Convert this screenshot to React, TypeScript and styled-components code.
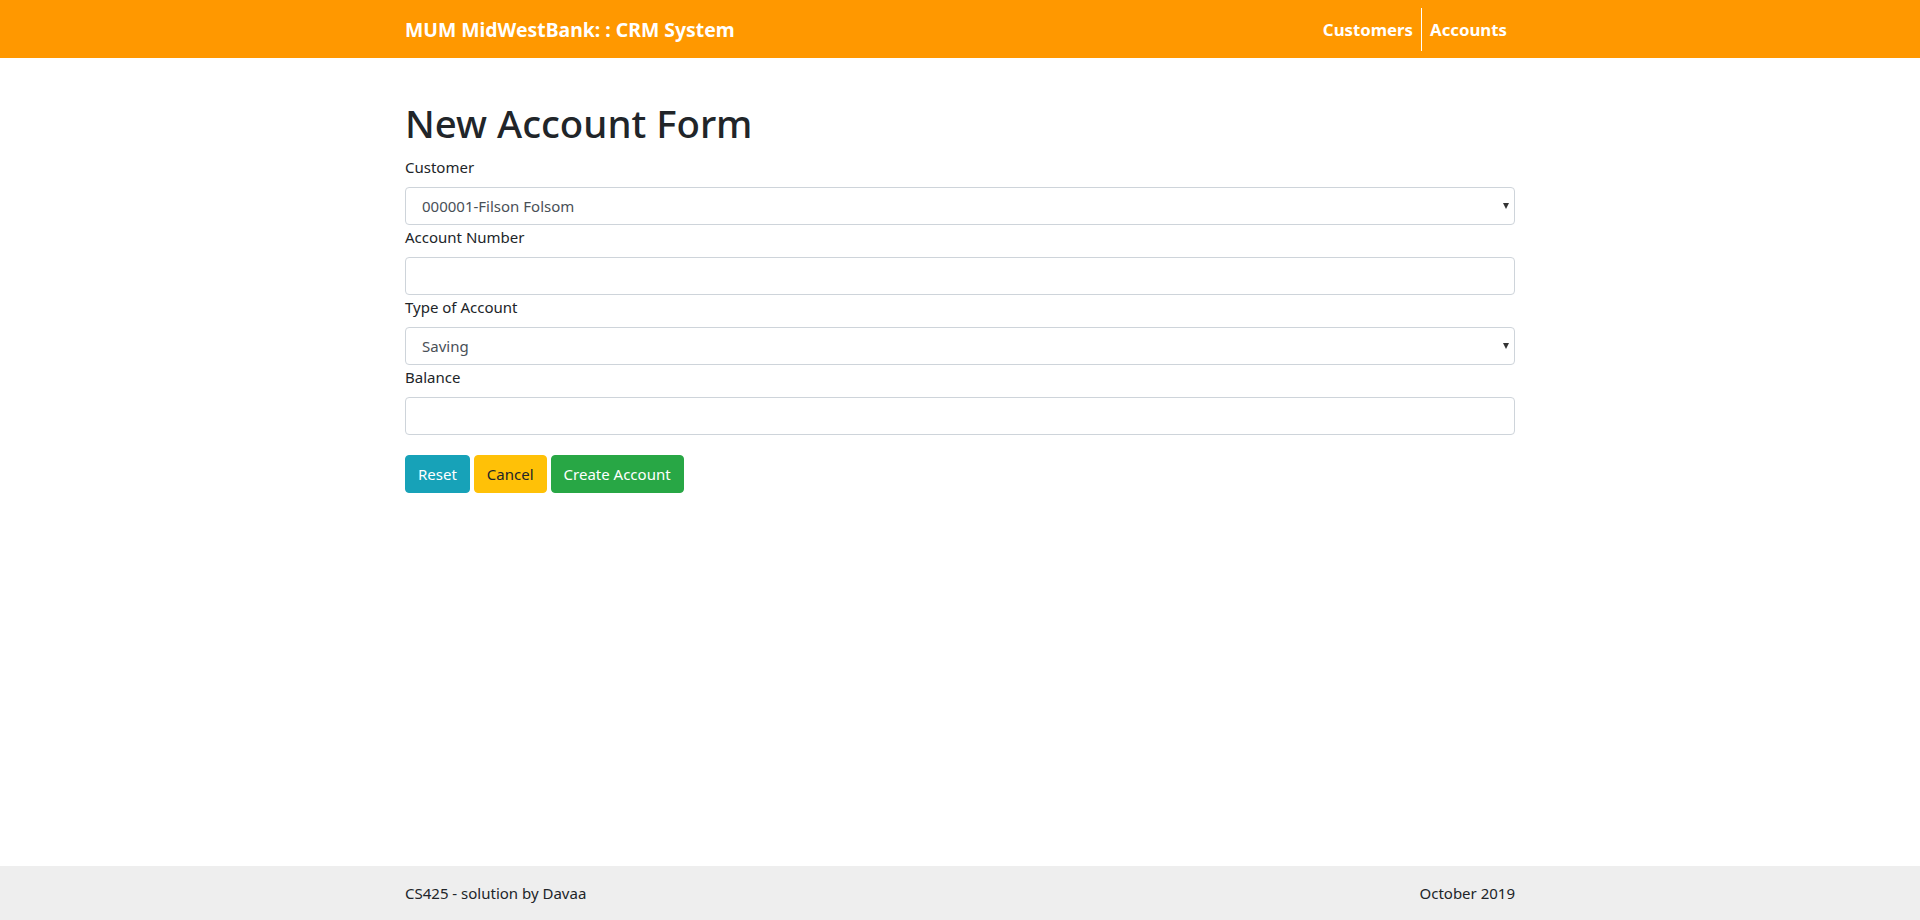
import React from "react";
import styled, { createGlobalStyle } from "styled-components";

const Global = createGlobalStyle`
  html, body { margin: 0; padding: 0; }
  body {
    font-family: "Segoe UI", "Noto Sans", "Open Sans", sans-serif;
    font-size: 16px;
    line-height: 1.5;
    color: #212529;
    background: #fff;
  }
  #root { min-height: 920px; display: flex; flex-direction: column; }
  * { box-sizing: border-box; }
`;

const Page = styled.div`
  min-height: 920px;
  display: flex;
  flex-direction: column;
`;

const NavBar = styled.header`
  background: #ff9800;
  height: 58px;
`;

const Container = styled.div`
  width: 1140px;
  margin: 0 auto;
  padding: 0 15px;
`;

const NavInner = styled(Container)`
  height: 100%;
  display: flex;
  align-items: center;
  justify-content: space-between;
  padding-top: 1px;
`;

const Brand = styled.a`
  color: #fff;
  font-weight: 700;
  font-size: 19.4px;
  text-decoration: none;
`;

const NavLinks = styled.nav`
  display: flex;
  align-items: center;
  height: 100%;
`;

const NavLink = styled.a<{ $divider?: boolean }>`
  color: #fff;
  font-weight: 700;
  font-size: 16.8px;
  text-decoration: none;
  padding: 0 8px;
  height: 43px;
  display: flex;
  align-items: center;
  border-left: ${(p) => (p.$divider ? "1px solid #fff" : "none")};
`;

const Main = styled(Container)`
  flex: 1;
  padding-top: 41px;
`;

const Title = styled.h1`
  font-size: 38.4px;
  font-weight: 500;
  line-height: 48px;
  margin: 0 0 8px;
`;

const Label = styled.label`
  display: block;
  font-size: 15px;
  line-height: 24px;
  margin-bottom: 8px;
`;

const Field = styled.input`
  display: block;
  width: 100%;
  height: 38px;
  padding: 6px 12px;
  font: inherit;
  font-size: 15px;
  color: #495057;
  background: #fff;
  border: 1px solid #ced4da;
  border-radius: 4px;
  margin: 0;
`;

const SelectWrap = styled.div`
  position: relative;
  &::after {
    content: "";
    position: absolute;
    right: 6px;
    top: 16px;
    border-left: 3.5px solid transparent;
    border-right: 3.5px solid transparent;
    border-top: 6px solid #333;
    pointer-events: none;
  }
`;

const Select = styled.select`
  display: block;
  width: 100%;
  height: 38px;
  padding: 6px 12px 6px 16px;
  font: inherit;
  font-size: 15px;
  color: #495057;
  background: #fff;
  border: 1px solid #ced4da;
  border-radius: 4px;
  appearance: none;
  -webkit-appearance: none;
  margin: 0;
`;

const Buttons = styled.div`
  display: flex;
  gap: 4px;
  margin-top: 20px;
`;

const Btn = styled.button<{ $bg: string; $fg: string }>`
  height: 38px;
  padding: 0 12px;
  font: inherit;
  font-size: 15px;
  border: 1px solid ${(p) => p.$bg};
  background: ${(p) => p.$bg};
  color: ${(p) => p.$fg};
  border-radius: 4px;
  cursor: pointer;
`;

const Footer = styled.footer`
  background: #eeeeee;
  height: 54px;
`;

const FooterInner = styled(Container)`
  height: 100%;
  display: flex;
  align-items: center;
  justify-content: space-between;
  font-size: 15px;
`;

export default function App() {
  return (
    <Page>
      <Global />
      <NavBar>
        <NavInner>
          <Brand href="#">MUM MidWestBank: : CRM System</Brand>
          <NavLinks>
            <NavLink href="#">Customers</NavLink>
            <NavLink href="#" $divider>Accounts</NavLink>
          </NavLinks>
        </NavInner>
      </NavBar>
      <Main>
        <Title>New Account Form</Title>
        <Label>Customer</Label>
        <SelectWrap>
          <Select defaultValue="1">
            <option value="1">000001-Filson Folsom</option>
          </Select>
        </SelectWrap>
        <Label>Account Number</Label>
        <Field />
        <Label>Type of Account</Label>
        <SelectWrap>
          <Select defaultValue="saving">
            <option value="saving">Saving</option>
            <option value="checking">Checking</option>
          </Select>
        </SelectWrap>
        <Label>Balance</Label>
        <Field />
        <Buttons>
          <Btn $bg="#17a2b8" $fg="#fff">Reset</Btn>
          <Btn $bg="#ffc107" $fg="#212529">Cancel</Btn>
          <Btn $bg="#28a745" $fg="#fff">Create Account</Btn>
        </Buttons>
      </Main>
      <Footer>
        <FooterInner>
          <span>CS425 - solution by Davaa</span>
          <span>October 2019</span>
        </FooterInner>
      </Footer>
    </Page>
  );
}
